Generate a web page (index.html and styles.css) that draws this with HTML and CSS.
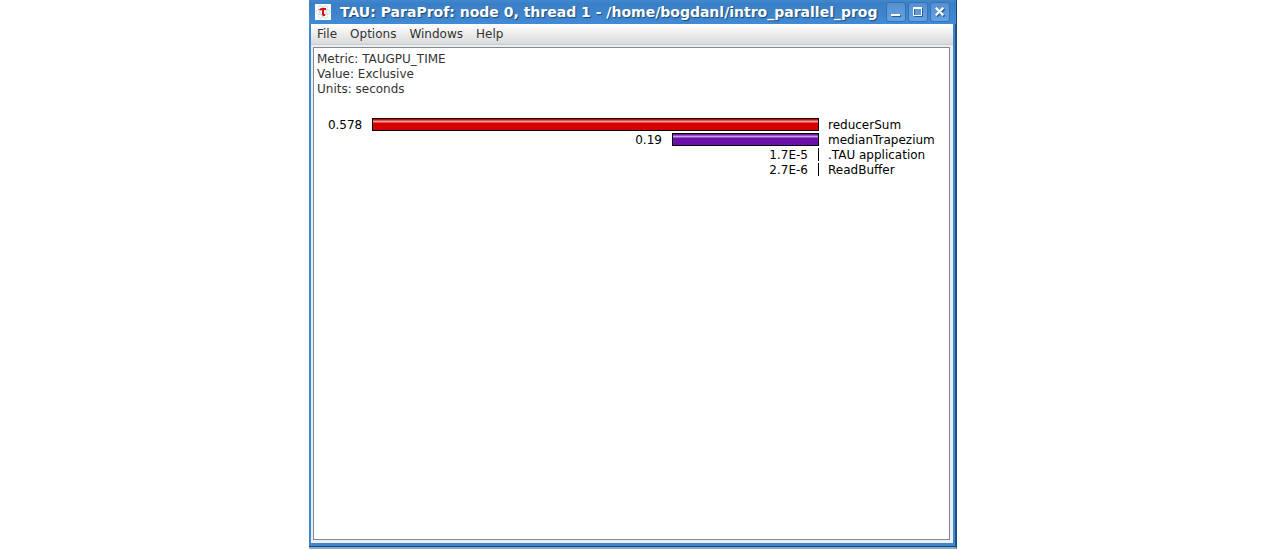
FILE: index.html
```html
<!DOCTYPE html>
<html lang="en">
<head>
<meta charset="utf-8">
<title>TAU: ParaProf</title>
<link rel="stylesheet" href="styles.css">
</head>
<body>
<div class="window">
  <header class="titlebar">
    <svg class="app-icon" viewBox="0 0 16 16" aria-hidden="true">
      <rect width="16" height="16" fill="#fff"/>
      <g fill="none" stroke="#d3d8d8" stroke-width="1">
        <ellipse cx="8" cy="8" rx="7" ry="3"/>
        <ellipse cx="8" cy="8" rx="7" ry="3" transform="rotate(60 8 8)"/>
        <ellipse cx="8" cy="8" rx="7" ry="3" transform="rotate(120 8 8)"/>
      </g>
      <path d="M5 6.2Q5.400 5 6.800 5H11M8 5V10Q8 11.500 10 10.800" fill="none" stroke="#d01018" stroke-width="2"/>
    </svg>
    <h1 class="title">TAU: ParaProf: node 0, thread 1 - /home/bogdanl/intro_parallel_prog</h1>
    <div class="controls">
      <button class="control" type="button" aria-label="Minimize">
        <svg viewBox="0 0 18 18"><path d="M5 13h9" stroke="#2a5a90" stroke-width="2"/><path d="M4 12h9" stroke="#fff" stroke-width="2"/></svg>
      </button>
      <button class="control" type="button" aria-label="Maximize">
        <svg viewBox="0 0 18 18" fill="none"><path d="M5.500 5.500h8v8h-8z" stroke="#2a5a90"/><path d="M4.500 4.500h8v8h-8z" stroke="#fff"/><path d="M4 4h9v2H4z" fill="#fff"/></svg>
      </button>
      <button class="control" type="button" aria-label="Close">
        <svg viewBox="0 0 18 18"><path d="M6 6l7.500 7.500M13.500 6L6 13.500" stroke="#2a5a90" stroke-width="2"/><path d="M4.800 4.800l7.500 7.500M12.300 4.800l-7.500 7.500" stroke="#fff" stroke-width="2.200"/></svg>
      </button>
    </div>
  </header>
  <div class="frame">
    <nav class="menubar">
      <button class="menu" type="button">File</button>
      <button class="menu" type="button">Options</button>
      <button class="menu" type="button">Windows</button>
      <button class="menu" type="button">Help</button>
    </nav>
    <main class="panel">
      <div class="meta">
        <div>Metric: TAUGPU_TIME</div>
        <div>Value: Exclusive</div>
        <div>Units: seconds</div>
      </div>
      <div class="chart">
        <div class="track"><span>0.578</span><div class="bar red" style="width:89%"></div></div>
        <div class="name">reducerSum</div>
        <div class="track"><span>0.19</span><div class="bar purple" style="width:29.3%"></div></div>
        <div class="name">medianTrapezium</div>
        <div class="track"><span>1.7E-5</span><div class="bar tick"></div></div>
        <div class="name">.TAU application</div>
        <div class="track"><span>2.7E-6</span><div class="bar tick"></div></div>
        <div class="name">ReadBuffer</div>
      </div>
    </main>
  </div>
</div>
</body>
</html>
```
FILE: styles.css
```css
* { box-sizing: border-box; }
body {
  margin: 0;
  min-height: 100vh;
  display: flex;
  padding: 0 320px 1px 309px;
  background: #fff;
  font: 12px/15px "DejaVu Sans", sans-serif;
}
.window {
  flex: 1;
  min-width: 0;
  display: flex;
  flex-direction: column;
  background: #3d86d0;
  border-right: 1px solid #1b4776;
  border-bottom: 2px solid #88abcb;
  box-shadow: inset 0 -1px #1b4776, inset -1px 0 #22558c;
}
.titlebar {
  height: 24px;
  display: flex;
  align-items: center;
  padding: 0 6px 1px 6px;
  background: linear-gradient(#4188d0 0, #3a7fc5 4px, #418ad6 100%);
}
.app-icon { width: 16px; height: 16px; flex: none; }
.title {
  flex: 1;
  min-width: 0;
  margin: 0 5px 0 9px;
  overflow: hidden;
  white-space: nowrap;
  color: #fff;
  font-size: 14px;
  line-height: 20px;
  text-shadow: 1px 1px 1px #1c4674;
}
.controls { display: flex; gap: 2px; }
.control {
  width: 20px;
  height: 20px;
  padding: 0;
  border: 1px solid #3474b6;
  border-radius: 3px;
  background: linear-gradient(#5690ce, #65a2e2);
}
.control svg { display: block; width: 18px; height: 18px; }
.frame {
  flex: 1;
  display: flex;
  flex-direction: column;
  margin: 0 3px 4px 2px;
  padding: 0 3px 3px 2px;
  background: #eee;
}
.menubar {
  height: 21px;
  display: flex;
  gap: 13px;
  margin: 0 -3px 2px -2px;
  padding: 0 6px;
  border-bottom: 1px solid #ccc;
  background: linear-gradient(#fff, #dadada);
}
.menu {
  padding: 0;
  border: 0;
  background: none;
  color: #333;
  font: inherit;
}
.panel {
  flex: 1;
  border: 1px solid #7a8a99;
  padding: 4px 3px;
  background: #fff;
}
.meta { color: #333; }
.chart {
  display: grid;
  grid-template-columns: 1fr 118px;
  column-gap: 9px;
  margin-top: 21px;
  color: #000;
}
.track {
  display: flex;
  justify-content: flex-end;
  align-items: flex-start;
  gap: 10px;
}
.name { white-space: nowrap; }
.bar { height: 13px; border: 1px solid #000; }
.red { background: linear-gradient(#d60000 0 1px, #e05050 1px 2px, #f0a0a0 2px 3px, #e05050 3px 4px, #d60000 4px); }
.purple { background: linear-gradient(#6a10a8 0 1px, #9555c2 1px 2px, #c6a0df 2px 3px, #9555c2 3px 4px, #6a10a8 4px); }
.tick { width: 1px; border-width: 0 0 0 1px; }
```
